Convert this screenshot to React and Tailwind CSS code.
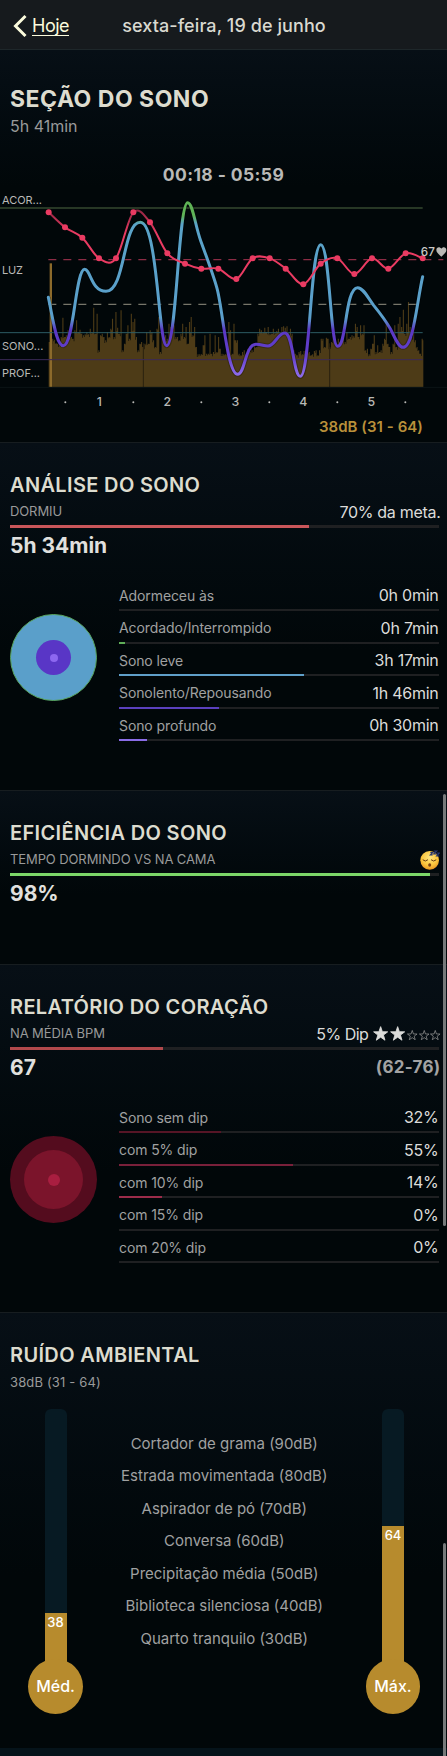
import React from "react";

const sleepPath =
  "M145 352 C158 410 168 497 190 497 C222 497 226 268 254 268 C272 268 274 334 318 334 C376 334 368 127 421 127 C474 127 475 497 500 497 C530 497 535 68 563 68 C578 68 585 135 602 182 C626 248 640 285 651 325 C668 385 682 583 713 583 C735 583 735 493 768 493 C786 493 790 498 804 498 C824 498 834 459 854 459 C880 459 880 589 901 589 C930 589 932 194 962 194 C990 194 990 499 1013 499 C1040 499 1035 323 1073 323 C1090 323 1104 354 1121 376 C1143 403 1156 420 1170 445 C1184 470 1195 502 1209 502 C1240 502 1250 370 1268 290";

const heartPoints = [
  [146, 97], [195, 142], [247, 173], [297, 235], [348, 235], [400, 97],
  [450, 127], [502, 220], [555, 251], [604, 266], [655, 266], [709, 297],
  [758, 235], [809, 235], [857, 266], [910, 313], [962, 251], [1012, 235],
  [1063, 282], [1116, 235], [1165, 266], [1217, 220], [1268, 235],
];

const noise = [
  135, 135, 145, 142, 132, 130, 128, 150, 208, 150, 155, 170, 165, 150, 145,
  170, 200, 165, 172, 160, 155, 158, 165, 158, 175, 165, 238, 160, 220, 110,
  155, 160, 150, 140, 165, 150, 175, 205, 150, 225, 178, 160, 230, 110, 130,
  160, 185, 145, 220, 195, 205, 150, 110, 130, 135, 120, 130, 165, 130, 170,
  165, 140, 120, 175, 210, 105, 190, 150, 155, 145, 190, 180, 170, 185, 150,
  150, 140, 160, 190, 150, 180, 130, 195, 210, 155, 180, 120, 98, 98, 98, 125,
  155, 100, 100, 160, 100, 105, 155, 105, 150, 115, 100, 98, 98, 130, 195, 170,
  100, 190, 140, 140, 100, 95, 105, 110, 100, 115, 105, 118, 110, 125, 120,
  160, 175, 170, 165, 178, 165, 180, 160, 160, 175, 165, 168, 175, 165, 180,
  182, 178, 182, 165, 175, 160, 110, 100, 95, 105, 108, 98, 108, 110, 112, 105,
  95, 98, 108, 110, 95, 110, 145, 145, 120, 148, 145, 120, 135, 155, 155, 130,
  145, 135, 138, 150, 135, 165, 145, 150, 155, 152, 190, 180, 150, 185, 160,
  185, 110, 115, 98, 115, 130, 155, 105, 125, 105, 110, 130, 145, 190, 130,
  120, 105, 130, 185, 120, 190, 210, 180, 232, 160, 190, 255, 180, 150, 190,
  140, 120, 110, 100, 145,
];

const smoothPath = (pts) => {
  let d = `M${pts[0][0]} ${pts[0][1]}`;
  for (let i = 0; i < pts.length - 1; i++) {
    const p0 = pts[i - 1] || pts[i];
    const p1 = pts[i];
    const p2 = pts[i + 1];
    const p3 = pts[i + 2] || p2;
    d += ` C${p1[0] + (p2[0] - p0[0]) / 6} ${p1[1] + (p2[1] - p0[1]) / 6} ${
      p2[0] - (p3[0] - p1[0]) / 6
    } ${p2[1] - (p3[1] - p1[1]) / 6} ${p2[0]} ${p2[1]}`;
  }
  return d;
};

const noisePath = () => {
  const step = 1124 / noise.length;
  let d = "M146 621";
  noise.forEach((h, i) => {
    const x = 146 + i * step;
    // narrow tall bars, with a shorter shoulder beside each one
    const next = noise[i + 1] || h;
    const low = Math.min(h, next, 170) - ((i * 7) % 9);
    d += ` V${621 - h} H${x + step * 0.65} V${621 - low} H${x + step}`;
  });
  return d + " V621 Z";
};

const SleepChart = () => (
  <svg
    viewBox="0 30 1341 666"
    className="block w-full h-[222px] font-[Inter,sans-serif]"
  >
    <defs>
      <linearGradient id="sleep" gradientUnits="userSpaceOnUse" x1="0" y1="0" x2="0" y2="600">
        <stop offset="0.18" stopColor="#5fb356" />
        <stop offset="0.22" stopColor="#5aa3c8" />
        <stop offset="0.69" stopColor="#5a9fcb" />
        <stop offset="0.75" stopColor="#5a38c4" />
        <stop offset="0.88" stopColor="#6340cc" />
        <stop offset="0.97" stopColor="#8b69e8" />
      </linearGradient>
      <linearGradient id="heart" gradientUnits="userSpaceOnUse" x1="0" y1="85" x2="0" y2="160">
        <stop offset="0" stopColor="#8c2440" />
        <stop offset="1" stopColor="#ea3b62" />
      </linearGradient>
    </defs>

    <path d={noisePath()} fill="#4d3b17" />
    <rect x="149" y="250" width="7" height="371" fill="#8c6a2b" />
    <path d="M430 490V621M989 490V621" stroke="#2a210f" strokeWidth="3" />

    {/* Level lines */}
    <path d="M0 84H1268" stroke="#34492f" strokeWidth="5" />
    <path d="M0 458H1268" stroke="#2c5c64" strokeWidth="3" />
    <path d="M0 539H1268" stroke="#3b2a58" strokeWidth="3" />
    <path d="M0 622H1341" stroke="#0b1416" strokeWidth="3" />
    <path d="M145 239H1330" stroke="#8c2c45" strokeWidth="3.5" strokeDasharray="24 21" />
    <path d="M145 373H1268" stroke="#77766a" strokeWidth="3.5" strokeDasharray="24 21" />

    <path d={sleepPath} fill="none" stroke="#000" strokeOpacity="0.25" strokeWidth="15" />
    <path
      d={sleepPath}
      fill="none"
      stroke="url(#sleep)"
      strokeWidth="9"
      strokeLinecap="round"
      strokeLinejoin="round"
    />
    <path d={smoothPath(heartPoints)} fill="none" stroke="url(#heart)" strokeWidth="6" />
    {heartPoints.map(([x, y]) => (
      <circle key={x} cx={x} cy={y} r="9" fill="#ea3b62" />
    ))}

    {/* Labels */}
    <g fill="#b9b9b6" fontSize="33">
      <text x="6" y="73" textLength="120">ACOR...</text>
      <text x="6" y="281" textLength="63">LUZ</text>
      <text x="6" y="510" textLength="124">SONO...</text>
      <text x="6" y="592" textLength="114">PROF...</text>
    </g>
    <g fill="#b9b9b6" fontSize="37" fontWeight="500" textAnchor="middle">
      {[1, 2, 3, 4, 5].map((n) => (
        <text key={n} x={94 + n * 204} y="678">
          {n}
        </text>
      ))}
      {[196, 400, 604, 808, 1012, 1216].map((x) => (
        <circle key={x} cx={x} cy="667" r="3" />
      ))}
    </g>
    <text x="1262" y="228" fontSize="35" fontWeight="500" fill="#c9c9c6" textLength="43">
      67
    </text>
    <path
      d="M1324 230 C1314 221 1309 217 1309 210 C1309 200 1320 199 1324 206 C1328 199 1339 200 1339 210 C1339 217 1334 221 1324 230Z"
      fill="#b9b9b6"
    />
  </svg>
);

const Bar = ({ value, color, height }) => (
  <div className={`${height} bg-[#1f2022]`}>
    <div className={`h-full ${color}`} style={{ width: `${value}%` }}></div>
  </div>
);

const Section = ({ title, height, children }) => (
  <section
    className={`${height} border-t border-[#171d20] bg-linear-to-b from-[#070f16] to-[#010709] to-60% pt-[30px] pl-2.5 pr-[8.5px]`}
  >
    <h2 className="text-[20px] leading-6 font-semibold tracking-[0.35px] text-[#dddccf]">
      {title}
    </h2>
    {children}
  </section>
);

const Summary = ({ label, right, bar, color, value, range }) => (
  <>
    <div className="mt-[3px] -mr-[2px] flex h-6 items-center justify-between">
      <span className="text-[13px] tracking-[-0.1px] text-[#999a9a]">{label}</span>
      {right}
    </div>
    <div className="mt-px">
      <Bar value={bar} color={color} height="h-[2.5px]" />
    </div>
    <div className="mt-[4.5px] -mr-[2px] flex h-7 items-center justify-between">
      <span className="text-[21px] font-bold text-[#e0e0de]">{value}</span>
      {range && (
        <span className="text-[17px] font-bold tracking-[0.3px] text-[#a3a3a3]">{range}</span>
      )}
    </div>
  </>
);

const Breakdown = ({ rows, children }) => (
  <div className="mt-[22px] flex">
    <div className="w-[109px] shrink-0 pt-8">{children}</div>
    <div className="flex-1">
      {rows.map((row) => (
        <div key={row.label} className="h-[32.6px]">
          <div className="mb-0.5 flex h-[25px] items-center justify-between pt-px">
            <span className="text-[14px] tracking-[-0.1px] text-[#a0a1a1]">{row.label}</span>
            <span className="text-[16px] tracking-[-0.25px] text-[#dcdcda]">{row.value}</span>
          </div>
          <Bar value={row.bar} color={row.color} height="h-0.5" />
        </div>
      ))}
    </div>
  </div>
);

const sleepRows = [
  { label: "Adormeceu às", value: "0h 0min", bar: 0, color: "" },
  { label: "Acordado/Interrompido", value: "0h 7min", bar: 2, color: "bg-[#5fae58]" },
  { label: "Sono leve", value: "3h 17min", bar: 57.8, color: "bg-[#5f9fc9]" },
  { label: "Sonolento/Repousando", value: "1h 46min", bar: 31.3, color: "bg-[#5a40bd]" },
  { label: "Sono profundo", value: "0h 30min", bar: 8.9, color: "bg-[#8a6ce6]" },
];

const heartRows = [
  { label: "Sono sem dip", value: "32%", bar: 32, color: "bg-[#561526]" },
  { label: "com 5% dip", value: "55%", bar: 54.5, color: "bg-[#79203a]" },
  { label: "com 10% dip", value: "14%", bar: 13.6, color: "bg-[#9c2c4a]" },
  { label: "com 15% dip", value: "0%", bar: 0, color: "" },
  { label: "com 20% dip", value: "0%", bar: 0, color: "" },
];

const noiseLevels = [
  "Cortador de grama (90dB)",
  "Estrada movimentada (80dB)",
  "Aspirador de pó (70dB)",
  "Conversa (60dB)",
  "Precipitação média (50dB)",
  "Biblioteca silenciosa (40dB)",
  "Quarto tranquilo (30dB)",
];

const starPoints = "12,1 14.7,9 23,9.2 16.4,14.2 18.8,22.3 12,17.5 5.2,22.3 7.6,14.2 1,9.2 9.3,9";

const Stars = () => (
  <span className="flex items-center">
    {[0, 1].map((i) => (
      <svg key={i} viewBox="0 0 24 24" className="mr-px size-[15.3px]">
        <polygon
          points={starPoints}
          fill="#dcdcda"
          stroke="#dcdcda"
          strokeWidth="1.4"
          strokeLinejoin="round"
        />
      </svg>
    ))}
    {[0, 1, 2].map((i) => (
      <svg key={i} viewBox="0 0 24 24" className="mt-0.5 ml-px size-[10.5px]">
        <polygon points={starPoints} fill="none" stroke="#a5a5a4" strokeWidth="1.5" />
      </svg>
    ))}
  </span>
);

const SleepyFace = () => (
  <svg viewBox="0 0 60 60" className="mr-px size-5">
    <defs>
      <radialGradient id="face" cx="0.5" cy="0.35" r="0.7">
        <stop offset="0" stopColor="#ffe680" />
        <stop offset="0.6" stopColor="#fbc63d" />
        <stop offset="1" stopColor="#e58a1c" />
      </radialGradient>
    </defs>
    <circle cx="29" cy="31" r="28" fill="url(#face)" />
    <path
      d="M9 30 Q16 37 23 30 M34 30 Q41 37 48 30"
      fill="none"
      stroke="#6b3d10"
      strokeWidth="3"
      strokeLinecap="round"
    />
    <ellipse cx="29" cy="45" rx="4.5" ry="5.5" fill="#7a3f12" />
    <path
      d="M31 8H38L31 15H38M41 3H50L41 12H50M50 9H58L50 18H58"
      fill="none"
      stroke="#26356f"
      strokeWidth="3.5"
    />
  </svg>
);

const Thermometer = ({ label, value, fill }) => (
  <div className="flex w-[55px] flex-col items-center">
    <div className="flex h-[253px] w-[22px] flex-col overflow-hidden rounded-t-md bg-[#071a23]">
      <div
        className={`${fill} mt-auto bg-[#b78b2d] pt-px text-center text-[13px] leading-4 font-medium text-white`}
      >
        {value}
      </div>
    </div>
    <div className="-mt-[3px] flex size-[54.5px] items-center justify-center rounded-full bg-[#b78b2d] text-[16px] font-medium text-white">
      {label}
    </div>
  </div>
);

const App = () => {
  return (
    <div className="relative h-[1756px] w-[447px] overflow-hidden bg-[#05131a] font-[Inter,sans-serif] whitespace-nowrap">
      {/* Header */}
      <header className="grid h-[50px] grid-cols-[1fr_auto_1fr] items-center border-b border-[#1e272a] bg-[#161a1d] pt-0.5">
        <a href="#" className="flex items-center pl-[13px] text-[18px] text-[#fbfbdc]">
          <svg viewBox="0 0 14 24" className="mr-[5px] h-6 w-3.5">
            <path d="M12.5 2 2.5 12 12.5 22" fill="none" stroke="currentColor" strokeWidth="3" />
          </svg>
          <span className="mt-0.5 border-b leading-[18px] border-[#fbfbdc] tracking-[-0.5px]">
            Hoje
          </span>
        </a>
        <h1 className="pl-px text-[18px] font-medium tracking-[0.08px] text-[#d9d9d0]">
          sexta-feira, 19 de junho
        </h1>
      </header>

      {/* Sleep session */}
      <section className="h-[392px] bg-linear-to-b from-[#070f16] to-[#010709] to-35% pt-[35px]">
        <h2 className="pl-2.5 text-[23px] leading-7 font-bold tracking-[0.5px] text-[#dddccf]">
          SEÇÃO DO SONO
        </h2>
        <p className="mt-px pl-2.5 text-[16px] leading-6 text-[#999a9a]">5h 41min</p>
        <p className="mt-[25px] h-[27px] text-center text-[17.5px] leading-6 font-bold tracking-[0.4px] text-[#b9b9b7]">
          00:18 - 05:59
        </p>
        <SleepChart />
        <p className="mt-[3px] pr-6 text-right text-[15px] leading-6 font-semibold tracking-[0.05px] text-[#b9903a]">
          38dB (31 - 64)
        </p>
      </section>

      <Section title="ANÁLISE DO SONO" height="h-[348px]">
        <Summary
          label="DORMIU"
          right={<span className="text-[16px] tracking-[-0.3px] text-[#dcdcda]">70% da meta.</span>}
          bar={69.7}
          color="bg-[#c9565a]"
          value="5h 34min"
        />
        <Breakdown rows={sleepRows}>
          <div className="flex size-[87px] items-center justify-center rounded-full border border-[#57a35c] bg-[#5a9fca]">
            <div className="flex size-[35px] items-center justify-center rounded-full bg-[#5936c6]">
              <div className="size-2 rounded-full bg-[#8d67f0]"></div>
            </div>
          </div>
        </Breakdown>
      </Section>

      <Section title="EFICIÊNCIA DO SONO" height="h-[174px]">
        <Summary
          label="TEMPO DORMINDO VS NA CAMA"
          right={<SleepyFace />}
          bar={98}
          color="bg-[#7cd768]"
          value="98%"
        />
      </Section>

      <Section title="RELATÓRIO DO CORAÇÃO" height="h-[348px]">
        <Summary
          label="NA MÉDIA BPM"
          right={
            <span className="flex items-center gap-[5px] text-[16px] tracking-[-0.5px] text-[#dcdcda]">
              5% Dip <Stars />
            </span>
          }
          bar={35.8}
          color="bg-[#b1494c]"
          value="67"
          range="(62-76)"
        />
        <Breakdown rows={heartRows}>
          <div className="flex size-[87px] items-center justify-center rounded-full bg-[#540c1e]">
            <div className="flex size-[59px] items-center justify-center rounded-full bg-[#7b142b]">
              <div className="size-3 rounded-full bg-[#a91e40]"></div>
            </div>
          </div>
        </Breakdown>
      </Section>

      <Section title="RUÍDO AMBIENTAL" height="h-[436px]">
        <p className="mt-[3px] text-[13px] leading-6 tracking-[0.15px] text-[#999a9a]">
          38dB (31 - 64)
        </p>
        <div className="mt-[15px] flex justify-between pr-[18px] pl-[18px]">
          <Thermometer label="Méd." value="38" fill="h-[49px]" />
          <ul className="pt-[18.5px] text-center text-[15px] leading-[32.6px] text-[#a0a1a1]">
            {noiseLevels.map((level) => (
              <li key={level}>{level}</li>
            ))}
          </ul>
          <Thermometer label="Máx." value="64" fill="h-[136px]" />
        </div>
      </Section>

      {/* Scroll indicators */}
      <div className="absolute top-[794px] right-px h-[432px] w-[3px] rounded-full bg-[#76797a]"></div>
      <div className="absolute top-[1543px] right-px h-[220px] w-[3px] rounded-full bg-[#76797a]"></div>
    </div>
  );
};

export default App;
